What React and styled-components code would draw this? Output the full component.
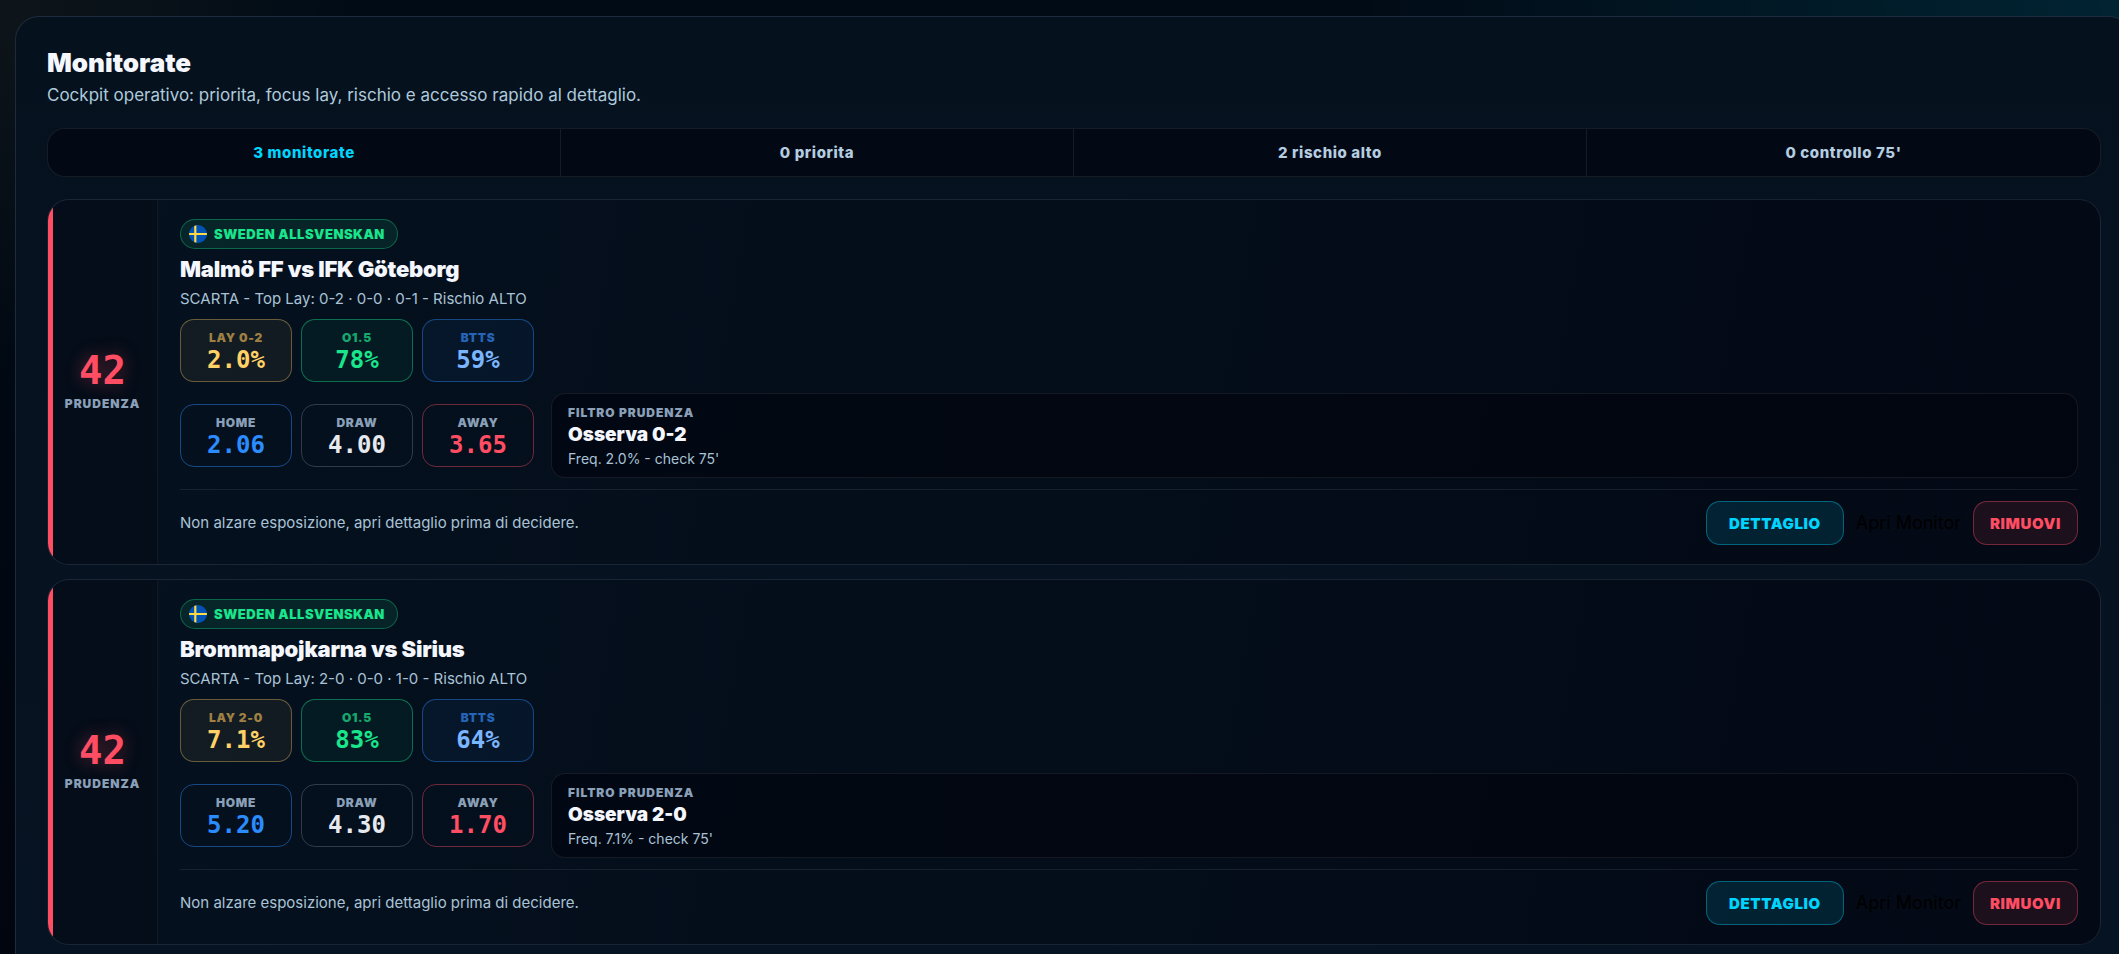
import React from 'react';
import styled, { createGlobalStyle } from 'styled-components';

const colors = {
  RED: '#ff4d63',
  GREEN: '#19e58c',
  CYAN: '#00d5ff',
  BLUE: '#2b8cff',
  SKY: '#7ab5ff',
  AMBER: '#ffd166',
  WHITE: '#f5f7ff',
  SOFT: '#a9c3d6',
  MUTED: '#8aa0b8',
  LINE: 'rgba(255, 255, 255, 0.08)'
};

const sans = "Inter, 'Liberation Sans', sans-serif";
const mono = "'DejaVu Sans Mono', 'Liberation Mono', monospace";

const GlobalStyle = createGlobalStyle`
  * {
    box-sizing: border-box;
  }

  body {
    margin: 0;
    background: #01060f;
    font-family: ${sans};
    overflow: hidden;
  }

  h1,
  h2,
  p {
    margin: 0;
  }
`;

const Page = styled.div`
  display: flow-root;
  height: 100vh;
  overflow: hidden;
  background:
    radial-gradient(circle at 0 0, rgba(255, 209, 102, 0.05), transparent 360px),
    radial-gradient(circle at 100% 0, rgba(0, 213, 255, 0.12), transparent 760px),
    linear-gradient(180deg, #010b16, #01050f);
`;

const Panel = styled.main`
  margin: 16px -14px 0 15px;
  min-height: 100vh;
  padding: 30px 31px;
  border: 1px solid rgba(140, 180, 210, 0.16);
  border-radius: 24px;
  background: linear-gradient(180deg, #06111e, #061322);
`;

const Title = styled.h1`
  font-size: 26px;
  line-height: 32px;
  font-weight: 900;
  color: ${colors.WHITE};
`;

const Subtitle = styled.p`
  margin-top: 5px;
  font-size: 17px;
  line-height: 22px;
  color: #aecadb;
`;

const Summary = styled.ul`
  display: grid;
  grid-template-columns: repeat(4, 1fr);
  margin: 22px 0;
  padding: 0;
  list-style: none;
  border: 1px solid ${colors.LINE};
  border-radius: 18px;
  background: #030914;
`;

const SummaryItem = styled.li`
  padding: 13px 16px;
  border-right: 1px solid ${colors.LINE};
  font-size: 15px;
  line-height: 21px;
  font-weight: 800;
  letter-spacing: 0.04em;
  text-align: center;
  color: ${props => (props.$active ? colors.CYAN : '#b4cde0')};

  &:last-child {
    border-right: 0;
  }
`;

const List = styled.div`
  display: grid;
  gap: 14px;
`;

const Card = styled.article`
  display: grid;
  grid-template-columns: 110px minmax(0, 1fr);
  overflow: hidden;
  border: 1px solid rgba(150, 180, 200, 0.14);
  border-radius: 22px;
  background: linear-gradient(100deg, #05111f, #030915);
`;

const Score = styled.div`
  display: flex;
  flex-direction: column;
  align-items: center;
  justify-content: center;
  gap: 5px;
  padding-bottom: 3px;
  border-right: 1px solid rgba(150, 180, 200, 0.08);
  background: rgba(0, 0, 0, 0.18);
  box-shadow: inset 5px 0 0 ${colors.RED};
`;

const ScoreValue = styled.strong`
  font-family: ${mono};
  font-size: 39px;
  line-height: 40px;
  color: ${colors.RED};
  text-shadow: 0 0 18px rgba(255, 77, 99, 0.4);
`;

const Caption = styled.span`
  font-size: 12px;
  line-height: 15px;
  font-weight: 900;
  letter-spacing: 0.08em;
  text-transform: uppercase;
  color: ${colors.MUTED};
`;

const Body = styled.div`
  padding: 19px 22px;
`;

const League = styled.div`
  display: inline-flex;
  align-items: center;
  gap: 7px;
  height: 30px;
  padding: 0 12px 0 8px;
  border: 1px solid rgba(25, 229, 140, 0.34);
  border-radius: 15px;
  background: rgba(25, 229, 140, 0.1);
  font-size: 13px;
  font-weight: 900;
  letter-spacing: 0.04em;
  text-transform: uppercase;
  color: ${colors.GREEN};
  vertical-align: top;
`;

const Match = styled.h2`
  margin-top: 7px;
  font-size: 22px;
  line-height: 26px;
  font-weight: 900;
  letter-spacing: -0.01em;
  color: ${colors.WHITE};
`;

const Text = styled.p`
  font-size: 15px;
  line-height: 20px;
  color: ${colors.SOFT};
`;

const Meta = styled(Text)`
  margin: 7px 0 10px;
`;

const Tiles = styled.div`
  display: grid;
  grid-template-columns: repeat(3, 112px);
  gap: 9px;
`;

const tones = {
  amber: { value: colors.AMBER, label: '#9f8044', line: 'rgba(255, 209, 102, 0.36)', fill: 'rgba(255, 209, 102, 0.06)' },
  green: { value: colors.GREEN, label: '#16a86d', line: 'rgba(25, 229, 140, 0.42)', fill: 'rgba(25, 229, 140, 0.05)' },
  sky: { value: colors.SKY, label: '#2465b8', line: 'rgba(43, 140, 255, 0.42)', fill: 'rgba(43, 140, 255, 0.06)' },
  blue: { value: colors.BLUE, line: 'rgba(43, 140, 255, 0.46)' },
  plain: { value: '#e6e9ee', line: 'rgba(200, 215, 235, 0.22)' },
  red: { value: colors.RED, line: 'rgba(255, 77, 99, 0.42)' }
};

const TileBox = styled.div`
  display: flex;
  flex-direction: column;
  align-items: center;
  justify-content: center;
  gap: 1px;
  height: 63px;
  padding-top: 2px;
  border: 1px solid ${props => tones[props.$tone].line};
  border-radius: 14px;
  background: ${props => tones[props.$tone].fill || 'transparent'};

  ${Caption} {
    letter-spacing: 0.06em;
    color: ${props => tones[props.$tone].label || colors.MUTED};
  }
`;

const TileValue = styled.strong`
  font-family: ${mono};
  font-size: 24px;
  line-height: 28px;
  color: ${props => tones[props.$tone].value};
`;

const OddsRow = styled.div`
  display: grid;
  grid-template-columns: auto minmax(0, 1fr);
  align-items: center;
  gap: 17px;
  margin-top: 11px;
`;

const Filter = styled.div`
  display: flex;
  flex-direction: column;
  justify-content: center;
  gap: 3px;
  height: 85px;
  padding: 0 16px;
  border: 1px solid ${colors.LINE};
  border-radius: 14px;
  background: rgba(0, 2, 10, 0.5);
`;

const FilterTitle = styled.strong`
  font-size: 19px;
  line-height: 24px;
  font-weight: 900;
  color: ${colors.WHITE};
`;

const FilterNote = styled.span`
  font-size: 14px;
  line-height: 17px;
  color: ${colors.SOFT};
`;

const Footer = styled.footer`
  display: flex;
  align-items: center;
  justify-content: space-between;
  margin-top: 11px;
  padding-top: 11px;
  border-top: 1px solid ${colors.LINE};
`;

const Actions = styled.div`
  display: flex;
  align-items: center;
  gap: 12px;
`;

const Button = styled.button`
  height: 44px;
  padding: 0 ${props => (props.$danger ? 16 : 22)}px;
  border: 1px solid ${props => (props.$danger ? 'rgba(255, 77, 99, 0.4)' : 'rgba(0, 213, 255, 0.36)')};
  border-radius: 14px;
  background: ${props => (props.$danger ? 'rgba(255, 77, 99, 0.1)' : 'rgba(0, 213, 255, 0.12)')};
  font-family: ${sans};
  font-size: 15px;
  font-weight: 900;
  letter-spacing: 0.04em;
  text-transform: uppercase;
  color: ${props => (props.$danger ? colors.RED : colors.CYAN)};
  cursor: pointer;
`;

const PlainButton = styled.button`
  padding: 0;
  border: 0;
  background: none;
  font-family: ${sans};
  font-size: 18px;
  line-height: 22px;
  color: #000;
  cursor: pointer;
`;

function SwedenFlag() {
  return (
    <svg width="18" height="18" viewBox="0 0 18 18" aria-hidden="true">
      <clipPath id="flag-round">
        <circle cx="9" cy="9" r="9" />
      </clipPath>
      <g clipPath="url(#flag-round)">
        <rect width="18" height="18" fill="#0052b4" />
        <path d="M5.2 0h2.2v18H5.2zM0 7.9h18v2.2H0z" fill="#ffda44" />
      </g>
    </svg>
  );
}

function Tile({ tone, label, value }) {
  return (
    <TileBox $tone={tone}>
      <Caption>{label}</Caption>
      <TileValue $tone={tone}>{value}</TileValue>
    </TileBox>
  );
}

function MatchCard({ match }) {
  return (
    <Card>
      <Score>
        <ScoreValue>{match.score}</ScoreValue>
        <Caption>Prudenza</Caption>
      </Score>
      <Body>
        <League>
          <SwedenFlag />
          {match.league}
        </League>
        <Match>{match.teams}</Match>
        <Meta>{match.meta}</Meta>
        <Tiles>
          <Tile tone="amber" label={`Lay ${match.lay}`} value={match.freq} />
          <Tile tone="green" label="O1.5" value={match.over} />
          <Tile tone="sky" label="BTTS" value={match.btts} />
        </Tiles>
        <OddsRow>
          <Tiles>
            <Tile tone="blue" label="Home" value={match.odds[0]} />
            <Tile tone="plain" label="Draw" value={match.odds[1]} />
            <Tile tone="red" label="Away" value={match.odds[2]} />
          </Tiles>
          <Filter>
            <Caption>Filtro prudenza</Caption>
            <FilterTitle>Osserva {match.lay}</FilterTitle>
            <FilterNote>Freq. {match.freq} - check 75'</FilterNote>
          </Filter>
        </OddsRow>
        <Footer>
          <Text>Non alzare esposizione, apri dettaglio prima di decidere.</Text>
          <Actions>
            <Button type="button">Dettaglio</Button>
            <PlainButton type="button">Apri Monitor</PlainButton>
            <Button type="button" $danger>
              Rimuovi
            </Button>
          </Actions>
        </Footer>
      </Body>
    </Card>
  );
}

const matches = [
  {
    score: 42,
    league: 'Sweden Allsvenskan',
    teams: 'Malmö FF vs IFK Göteborg',
    meta: 'SCARTA - Top Lay: 0-2 · 0-0 · 0-1 - Rischio ALTO',
    lay: '0-2',
    freq: '2.0%',
    over: '78%',
    btts: '59%',
    odds: ['2.06', '4.00', '3.65']
  },
  {
    score: 42,
    league: 'Sweden Allsvenskan',
    teams: 'Brommapojkarna vs Sirius',
    meta: 'SCARTA - Top Lay: 2-0 · 0-0 · 1-0 - Rischio ALTO',
    lay: '2-0',
    freq: '7.1%',
    over: '83%',
    btts: '64%',
    odds: ['5.20', '4.30', '1.70']
  }
];

const summary = ['3 monitorate', '0 priorita', '2 rischio alto', "0 controllo 75'"];

function App() {
  return (
    <Page>
      <GlobalStyle />
      <Panel>
        <Title>Monitorate</Title>
        <Subtitle>Cockpit operativo: priorita, focus lay, rischio e accesso rapido al dettaglio.</Subtitle>
        <Summary>
          {summary.map((item, i) => (
            <SummaryItem key={item} $active={i === 0}>
              {item}
            </SummaryItem>
          ))}
        </Summary>
        <List>
          {matches.map(match => (
            <MatchCard key={match.teams} match={match} />
          ))}
        </List>
      </Panel>
    </Page>
  );
}

export default App;
